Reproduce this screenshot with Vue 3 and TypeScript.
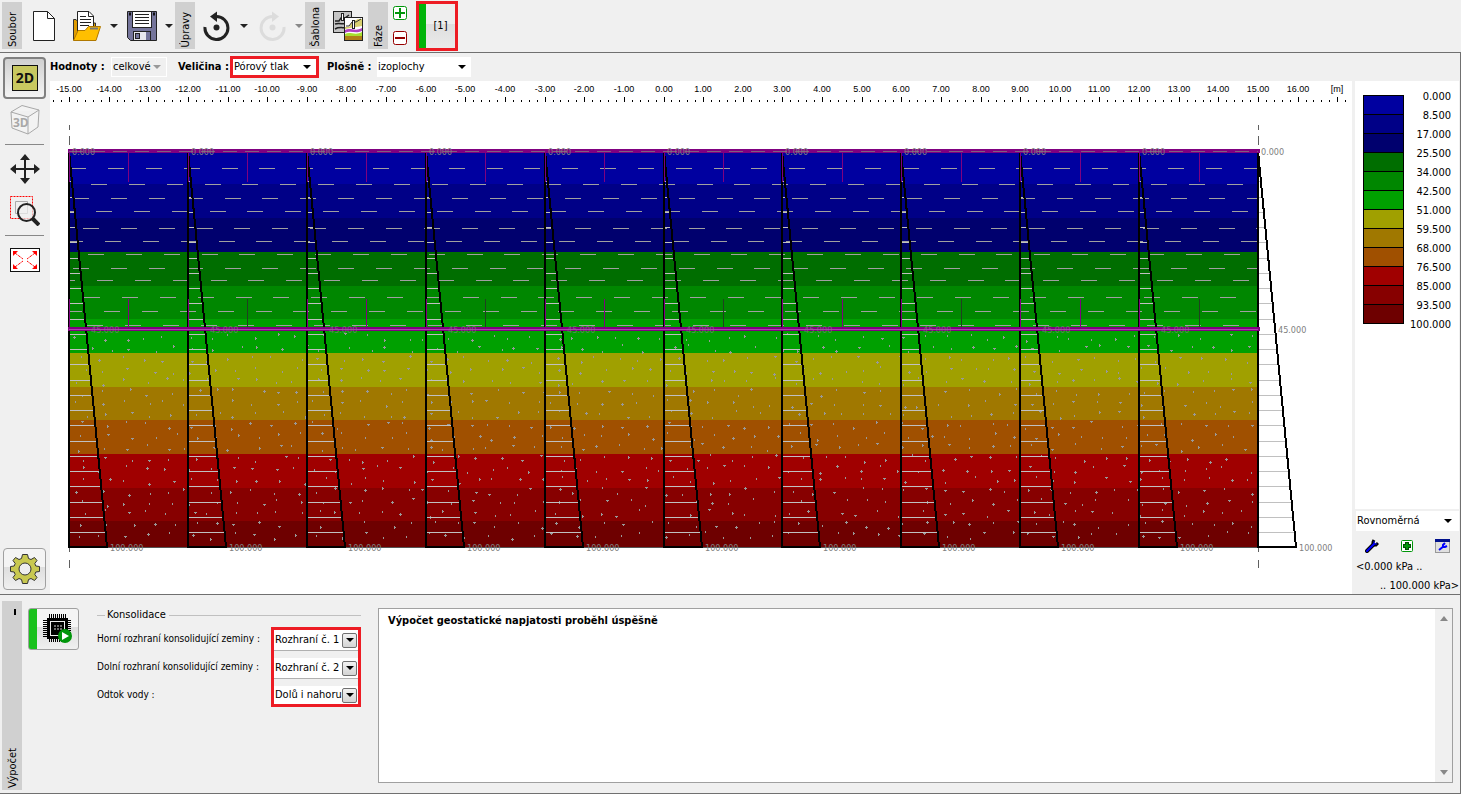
<script setup lang="ts">
import { ref } from 'vue'

const total = ref('celkové')
const quantity = ref('Pórový tlak')
const surface = ref('izoplochy')
const scaleKind = ref('Rovnoměrná')

const params = ref([
  { id: 'top', label: 'Horní rozhraní konsolidující zeminy :', value: 'Rozhraní č. 1', options: ['Rozhraní č. 1', 'Rozhraní č. 2'] },
  { id: 'bottom', label: 'Dolní rozhraní konsolidující zeminy :', value: 'Rozhraní č. 2', options: ['Rozhraní č. 1', 'Rozhraní č. 2'] },
  { id: 'drain', label: 'Odtok vody :', value: 'Dolů i nahoru', options: ['Dolů i nahoru', 'Nahoru', 'Dolů'] },
])

const colors = ['#0000a0', '#000087', '#00006e', '#006e00', '#008700', '#00a000', '#a0a000', '#a07800', '#a05000', '#a00000', '#870000', '#6e0000']
const levels = ['0.000', '8.500', '17.000', '25.500', '34.000', '42.500', '51.000', '59.500', '68.000', '76.500', '85.000', '93.500', '100.000']

const left = 69
const right = 1258
const top = 151
const bottom = 547
const perMetre = (right - left) / 30
const toX = (m: number) => Math.round(left + (m + 15) * perMetre)

const edges = [150, 184, 218, 252, 286, 319, 353, 387, 420, 454, 488, 521, 547]
const bands = colors.map((fill, i) => ({ fill, y: edges[i], h: edges[i + 1] - edges[i] }))

const rulerLabels = Array.from({ length: 32 }, (_, i) => ({ x: toX(i - 15), text: (i - 15).toFixed(2) }))
const ticks = Array.from({ length: 164 }, (_, i) => {
  const k = i - 77
  return { x: toX(k / 5), major: k % 5 === 0 }
})

const profiles = Array.from({ length: 11 }, (_, i) => toX(i * 3 - 15))
const innerProfiles = profiles.slice(0, 10)
const hatchYs = Array.from({ length: 25 }, (_, i) => Math.round(166 + i * 15.25))
const slopeAt = (y: number) => ((y - top) / (bottom - top)) * 38

const clayRows = [
  [168, 108], [184, 91], [198, 111], [211, 96], [228, 83], [241, 105],
  [254, 88], [268, 111], [280, 97], [297, 122], [311, 142], [325, 87],
]
const clay = clayRows.flatMap(([y, start]) => {
  const out: { x: number; y: number; w: number }[] = []
  for (let k = -2; k < 33; k++) {
    const x = Math.round(start + k * 37.85)
    const a = Math.max(x, 70)
    const b = Math.min(x + 16, right)
    if (b > a) out.push({ x: a, y, w: b - a })
  }
  return out
})

const arrows = Array.from({ length: 20 }, (_, i) => ({
  x: Math.round(left + i * 59.45),
  dark: i % 4 === 3,
}))

let seed = 41
const rand = () => {
  seed = (seed * 16807) % 2147483647
  return seed / 2147483647
}
const glyphs = ['h1v2h-1z', 'h1v2h-1z', 'h1v2h-1z', 'h3v1h-1v1h-1v-1h-1z', 'h1v1h1v1h-1v1h-1z', 'h1v1h1v1h-1v1h-1v-1h-1v-1h1z']
let sandPath = ''
for (let row = 0; row < 19; row++) {
  for (let col = 0; col < 55; col++) {
    const x = Math.round(74 + col * 21.6 + rand() * 12 + (row % 2) * 6)
    const y = Math.round(333 + row * 11 + rand() * 7)
    const g = glyphs[Math.floor(rand() * glyphs.length)]
    if (x < right - 4) sandPath += `M${x} ${y}${g}`
  }
}
</script>

<template>
  <div class="app">
    <header class="toolbar">
      <div class="tab"><span>Soubor</span></div>
      <button class="tool" aria-label="Nový">
        <svg width="24" height="32" viewBox="0 0 24 32"><path d="M1.500 1.500H15.500L22.500 8.500V30.500H1.500Z" fill="#fff" stroke="#222" /><path d="M15.500 1.500V8.500H22.500" fill="none" stroke="#222" /></svg>
      </button>
      <button class="tool first" aria-label="Otevřít">
        <svg width="30" height="32" viewBox="0 0 30 32">
          <path d="M1.500 30V9.500H4L7 13H23.500V30Z" fill="#e09c00" stroke="#333" />
          <path d="M5.500 23V1.500H17L21.500 6V20Z" fill="#fff" stroke="#222" />
          <path d="M16.500 1.500V6.500H21.500M8 6.500H14M8 9.500H19M8 12.500H19M8 15.500H17" fill="none" stroke="#222" />
          <path d="M1.500 30.500L6 20.500H13L16.500 16.500H28.500L24 30.500Z" fill="#ffbf00" stroke="#b07800" />
          <path d="M18 18.500H26" stroke="#777" stroke-width="2" />
        </svg>
      </button>
      <button class="drop" aria-label="Otevřít – nabídka"><svg width="8" height="4"><path d="M0 0H8L4 4Z" fill="#222" /></svg></button>
      <button class="tool" aria-label="Uložit">
        <svg width="30" height="32" viewBox="0 0 30 32">
          <path d="M.5 1.500H29.500V30.500H3.500L.5 27.500Z" fill="#75759b" stroke="#222" />
          <rect x="5.500" y="1.500" width="19" height="16" fill="#fff" stroke="#222" />
          <path d="M8 4.500H22M8 7.500H22M8 10.500H22M8 13.500H22" stroke="#222" />
          <path d="M2 4H4M26 4H28" stroke="#111" stroke-width="3" />
          <rect x="6.500" y="21.500" width="17" height="9" fill="#e8e8ee" stroke="#222" />
          <rect x="8.500" y="23.500" width="4" height="5" fill="#75759b" stroke="#222" />
          <rect x="19" y="22" width="4" height="8" fill="#75759b" />
        </svg>
      </button>
      <button class="drop" aria-label="Uložit – nabídka"><svg width="8" height="4"><path d="M0 0H8L4 4Z" fill="#222" /></svg></button>
      <div class="tab"><span>Úpravy</span></div>
      <button class="tool" aria-label="Zpět">
        <svg width="28" height="30" viewBox="0 0 28 30"><path d="M2 16A11.500 11.500 0 1 0 13 5.500" fill="none" stroke="#222" stroke-width="3" /><path d="M14 .5V11L7 5.500Z" fill="#222" /><circle cx="13.500" cy="16.500" r="3" fill="#222" /></svg>
      </button>
      <button class="drop" aria-label="Zpět – nabídka"><svg width="8" height="4"><path d="M0 0H8L4 4Z" fill="#222" /></svg></button>
      <button class="tool" aria-label="Znovu" disabled>
        <svg width="28" height="30" viewBox="0 0 28 30"><path d="M26 16A11.500 11.500 0 1 1 15 5.500" fill="none" stroke="#dcdcdc" stroke-width="3" /><path d="M14 .5V11L21 5.500Z" fill="#dcdcdc" /><circle cx="14.500" cy="16.500" r="3" fill="#dcdcdc" /></svg>
      </button>
      <button class="drop" aria-label="Znovu – nabídka" disabled><svg width="8" height="4"><path d="M0 0H8L4 4Z" fill="#888" /></svg></button>
      <div class="tab"><span>Šablona</span></div>
      <button class="tool first" aria-label="Šablona">
        <svg width="30" height="32" viewBox="0 0 30 32">
          <rect x=".5" y="1.500" width="18" height="21" fill="#c4c4c4" stroke="#222" />
          <path d="M2 11H6L8 8H12L16 5M2 14C7 12 12 16 17 12M2 19C7 16 11 19 17 17" fill="none" stroke="#222" stroke-width="1.500" />
          <rect x="8.500" y="3.500" width="2" height="7" fill="#fff" stroke="#222" />
          <rect x="11.500" y="7.500" width="18" height="23" fill="#fff" stroke="#222" />
          <path d="M12 17H16L19 12L25 9H29V16L12 19Z" fill="#d8d070" />
          <path d="M12 20C17 17 22 22 29 18V21C22 24 18 20 12 23Z" fill="#b040c0" />
          <path d="M12 24C17 21 22 26 29 22V26H12Z" fill="#a8e030" />
          <rect x="12" y="26" width="17" height="4" fill="#b08018" />
          <path d="M13 16H16L19 12H23L28 9" fill="none" stroke="#333" />
          <rect x="19.500" y="10.500" width="2" height="8" fill="#fff" stroke="#222" />
        </svg>
      </button>
      <div class="tab"><span>Fáze</span></div>
      <div class="phase-edit">
        <button aria-label="Přidat fázi"><svg width="14" height="14"><rect x=".5" y=".5" width="13" height="13" rx="2" fill="#fff" stroke="#00960a" /><path d="M2 7H12M7 2V12" stroke="#00960a" stroke-width="2" /></svg></button>
        <button aria-label="Odebrat fázi"><svg width="14" height="14"><rect x=".5" y=".5" width="13" height="13" rx="2" fill="#fff" stroke="#960000" /><path d="M2 7H12" stroke="#960000" stroke-width="2" /></svg></button>
      </div>
      <button class="phase">[1]</button>
    </header>

    <main class="work">
      <nav class="side">
        <button class="side-btn pressed" aria-label="2D">
          <svg width="26" height="26"><rect x=".5" y=".5" width="25" height="25" fill="#c8c860" stroke="#111" /><text x="13" y="18" text-anchor="middle" class="icon-text">2D</text></svg>
        </button>
        <button class="side-btn" aria-label="3D">
          <svg width="30" height="32" viewBox="0 0 30 32"><path d="M1 8L12 1.500L29 6L28 23L18 30L2 24ZM1 8L18 13L29 6M18 13V30" fill="#f3f3f3" stroke="#a8a8a8" /><text x="3" y="23" class="icon-text cube">3D</text></svg>
        </button>
        <hr />
        <button class="side-btn" aria-label="Posun">
          <svg width="30" height="30"><path d="M15 4V26M4 15H26" stroke="#222" stroke-width="2" /><path d="M15 0L20 6H10ZM15 30L20 24H10ZM0 15L6 10V20ZM30 15L24 10V20Z" fill="#222" /></svg>
        </button>
        <button class="side-btn" aria-label="Zvětšit výřez">
          <svg width="30" height="30"><rect x=".5" y=".5" width="22" height="22" fill="none" stroke="#f00" stroke-dasharray="2 1" /><path d="M5.500 5.500H17.500V17.500H5.500Z" fill="none" stroke="#aaa" /><circle cx="16.500" cy="16.500" r="8.500" fill="#f0f0f0" fill-opacity=".7" stroke="#222" stroke-width="2" /><path d="M22.500 22.500L29 29" stroke="#222" stroke-width="4" /></svg>
        </button>
        <hr />
        <button class="side-btn" aria-label="Zobrazit vše">
          <svg width="30" height="24"><rect x=".5" y=".5" width="29" height="23" fill="#fff" stroke="#111" /><path d="M5 5L13 11M25 5L17 11M5 19L13 13M25 19L17 13" stroke="#f00" stroke-dasharray="3 1" /><path d="M3 3H8L3 8ZM27 3H22L27 8ZM3 21H8L3 16ZM27 21H22L27 16Z" fill="#f00" /></svg>
        </button>
        <button class="side-btn raised" aria-label="Nastavení">
          <svg width="32" height="32" viewBox="-16 -16 32 32">
            <path d="M-2.500 -14.500H2.500L3.500 -10.500L6 -9.500L9.500 -11.500L12 -8.500L9.800 -5.500L10.800 -3L14.500 -2.500V2.500L10.800 3L9.800 5.500L12 8.500L9.500 11.500L6 9.500L3.500 10.500L2.500 14.500H-2.500L-3.500 10.500L-6 9.500L-9.500 11.500L-12 8.500L-9.800 5.500L-10.800 3L-14.500 2.500V-2.500L-10.800 -3L-9.800 -5.500L-12 -8.500L-9.500 -11.500L-6 -9.500L-3.500 -10.500Z" fill="#c8c850" stroke="#333" />
            <circle r="6" fill="#eee" stroke="#333" />
          </svg>
        </button>
      </nav>

      <section class="view">
        <div class="options">
          <label class="bold" for="total">Hodnoty :</label>
          <div class="pick disabled w56"><select id="total" v-model="total" disabled><option>celkové</option></select><svg width="8" height="4"><path d="M0 0H8L4 4Z" fill="#999" /></svg></div>
          <label class="bold gap" for="quantity">Veličina :</label>
          <div class="pick marked w88"><select id="quantity" v-model="quantity"><option>Pórový tlak</option></select><svg width="8" height="4"><path d="M0 0H8L4 4Z" /></svg></div>
          <label class="bold third" for="surface">Plošně :</label>
          <div class="pick w94"><select id="surface" v-model="surface"><option>izoplochy</option></select><svg width="8" height="4"><path d="M0 0H8L4 4Z" /></svg></div>
        </div>

        <div class="plot">
          <svg class="canvas" viewBox="50 81 1302 513" preserveAspectRatio="xMinYMin meet">
            <g shape-rendering="crispEdges">
              <rect v-for="(t, i) in ticks" :key="i" :x="t.x" :y="t.major ? 97 : 100" width="1" :height="t.major ? 5 : 2" />
            </g>
            <g class="ruler">
              <text v-for="l in rulerLabels" :key="l.text" :x="l.x" y="92">{{ l.text }}</text>
              <text x="1337" y="92">[m]</text>
            </g>

            <g shape-rendering="crispEdges">
              <rect v-for="b in bands" :key="b.y" :x="left" :y="b.y" :width="right - left" :height="b.h" :fill="b.fill" />
              <rect v-for="(d, i) in clay" :key="i" :x="d.x" :y="d.y" :width="d.w" height="1" fill="#a0a0a0" />
              <path :d="sandPath" fill="#999" />
              <path :d="`M${left} 547.500H${right}`" stroke="#555" />
              <path v-for="x in [left, right]" :key="x" :d="`M${x + 0.5} 125v5m0 6v9M${x + 0.5} 547v5m0 8v8`" stroke="#606060" />
              <template v-for="x in profiles" :key="x">
                <rect v-for="y in hatchYs" :key="y" :x="x" :y="y" :width="slopeAt(y)" height="1" fill="#c0c0c0" />
                <path :d="`M${x} ${top}V${bottom}H${x + 38}L${x} ${top}`" fill="none" stroke="#000" stroke-width="2" />
              </template>
              <rect v-for="a in arrows" :key="`u${a.x}`" :x="a.x" y="153" width="1" height="29" fill="#800080" />
              <rect v-for="a in arrows" :key="`l${a.x}`" :x="a.x" y="299" width="1" height="28" :fill="a.dark ? '#204020' : '#800080'" />
            </g>

            <g shape-rendering="crispEdges">
              <rect x="68" y="149" width="1192" height="4" fill="#800080" />
              <path d="M69 151.500H1258" stroke="#806080" stroke-dasharray="14 8" />
              <rect x="68" y="327" width="1192" height="4" fill="#800080" />
              <path d="M69 329.500H1258" stroke="#b040b0" />
            </g>
            <g class="values">
              <template v-for="x in innerProfiles" :key="x">
                <text :x="x + 3" y="155">0.000</text>
                <text :x="x + 22" y="333" opacity=".7">45.000</text>
                <text :x="x + 41" y="551">100.000</text>
              </template>
              <text x="1261" y="155">0.000</text>
              <text x="1278" y="333">45.000</text>
              <text x="1299" y="551">100.000</text>
            </g>
          </svg>

          <aside class="legend">
            <div class="scale">
              <div class="swatches"><i v-for="c in colors" :key="c" :style="{ background: c }"></i></div>
              <ol><li v-for="l in levels" :key="l">{{ l }}</li></ol>
            </div>
            <div class="legend-foot">
              <div class="pick wide"><select v-model="scaleKind" aria-label="Stupnice"><option>Rovnoměrná</option></select><svg width="8" height="4"><path d="M0 0H8L4 4Z" /></svg></div>
              <div class="legend-tools">
                <button aria-label="Upravit stupnici"><svg width="14" height="14"><path d="M2 12L8 6" stroke="#000" stroke-width="4" stroke-linecap="round" /><path d="M9 1L8 3V6H11L13 4" fill="none" stroke="#000" stroke-width="3" /><path d="M2 12L9 5" stroke="#00f" stroke-width="2" stroke-linecap="round" /><path d="M9 2V5H12" fill="none" stroke="#00f" /></svg></button>
                <button aria-label="Přidat stupnici"><svg width="12" height="12"><rect x=".5" y=".5" width="11" height="11" rx="1" fill="#fff" stroke="#00960a" /><path d="M2 6H10M6 2V10" stroke="#004d00" stroke-width="4" /><path d="M3 6H9M6 3V9" stroke="#00960a" stroke-width="2" /></svg></button>
                <button aria-label="Správce stupnic"><svg width="15" height="14"><rect x=".5" y=".5" width="14" height="13" fill="#e0e0e0" stroke="#999" /><rect width="15" height="3" fill="#00108c" /><path d="M4 11L9 7" stroke="#00f" stroke-width="2" /><path d="M10 4L8 6V8H10L12 7" fill="none" stroke="#00f" stroke-width="2" /></svg></button>
              </div>
              <p>&lt;0.000 kPa ..</p>
              <p class="end">.. 100.000 kPa&gt;</p>
            </div>
          </aside>
        </div>
      </section>
    </main>

    <section class="panel">
      <div class="tab tall"><b></b><span>Výpočet</span></div>
      <button class="compute" aria-label="Spustit výpočet">
        <svg width="30" height="30">
          <path d="M6 2H24M6 26H24" stroke="#000" stroke-width="4" stroke-dasharray="1 1" />
          <path d="M2 6V24M26 6V24" stroke="#000" stroke-width="4" stroke-dasharray="1 1" />
          <rect x="4" y="4" width="21" height="21" fill="#000" />
          <rect x="7.500" y="7.500" width="14" height="14" fill="none" stroke="#eee" />
          <path d="M11 12H19M11 15H19" stroke="#ddd" stroke-dasharray="2 1" />
          <circle cx="22" cy="22" r="7" fill="#00960a" /><path d="M19 18L26 22L19 26Z" fill="#fff" />
        </svg>
      </button>
      <fieldset class="params">
        <legend>Konsolidace</legend>
        <div class="grid">
          <div class="labels"><label v-for="p in params" :key="p.id" :for="p.id">{{ p.label }}</label></div>
          <div class="combos">
            <div v-for="p in params" :key="p.id" class="combo">
              <select :id="p.id" v-model="p.value"><option v-for="o in p.options" :key="o">{{ o }}</option></select>
              <i><svg width="8" height="4"><path d="M0 0H8L4 4Z" /></svg></i>
            </div>
          </div>
        </div>
      </fieldset>
      <div class="log">
        <p>Výpočet geostatické napjatosti proběhl úspěšně</p>
        <div class="bar">
          <svg width="8" height="5"><path d="M0 5H8L4 0Z" fill="#888" /></svg>
          <svg width="8" height="5"><path d="M0 0H8L4 5Z" fill="#888" /></svg>
        </div>
      </div>
    </section>
  </div>
</template>

<style>
body { margin: 0; background: #f0f0f0; }
</style>

<style scoped>
* { box-sizing: border-box; }
.app { display: flex; flex-direction: column; min-height: 100vh; background: #f0f0f0; color: #000; font: 11px/14px "DejaVu Sans Condensed", "DejaVu Sans", sans-serif; }
button { display: flex; align-items: center; justify-content: center; padding: 0; border: 0; background: none; font: inherit; color: inherit; }
svg { display: block; flex: none; }
p, ol { margin: 0; padding: 0; list-style: none; }

.toolbar { display: flex; height: 53px; padding: 2px 2px 0; border-bottom: 1px solid #707070; }
.tab { display: flex; flex-direction: column; align-items: center; justify-content: flex-end; width: 20px; height: 47px; padding: 0 0 2px 2px; background: #d0d0d0; }
.tab span { writing-mode: vertical-rl; transform: rotate(180deg); white-space: nowrap; }
.tool { width: 40px; height: 48px; margin-left: 2px; }
.tool.first { width: 41px; }
.drop { width: 13px; height: 48px; }
.phase-edit { display: flex; flex-direction: column; gap: 11px; padding: 4px 9px 0 5px; }
.phase { width: 42px; height: 50px; margin-top: -1px; border: 3px solid #ed1c24; background: linear-gradient(90deg, #00b40a 7px, transparent 7px), linear-gradient(#eee 45%, #dedede 45%, #eaeaea); padding-left: 7px; }

.work { display: flex; flex: 1; border-right: 1px solid #707070; }
.side { display: flex; flex-direction: column; width: 50px; padding: 4px 4px 4px 3px; }
.side-btn { width: 43px; height: 42px; border-radius: 4px; }
.side-btn.pressed { border: 2px solid #808080; background: linear-gradient(#d0d0d0, #f4f4f4); }
.side-btn.raised { margin-top: auto; border: 1px solid #a0a0a0; background: linear-gradient(#f4f4f4 45%, #dedede 45%, #f0f0f0); }
.side hr { width: 39px; height: 1px; margin: 3px 2px; border: 0; background: #888; }
.icon-text { font: bold 14px "Open Sans", sans-serif; fill: #111; }
.icon-text.cube { font-size: 12px; fill: #a8a8a8; }

.view { display: flex; flex: 1; flex-direction: column; min-width: 0; }
.options { display: flex; align-items: center; height: 28px; }
.bold { font-weight: bold; width: 61px; white-space: nowrap; }
.bold.gap { width: 52px; margin-left: 11px; }
.bold.third { width: 50px; margin-left: 8px; }
.pick { display: flex; align-items: center; height: 20px; padding-right: 5px; background: #fff; }
.pick select { flex: 1; min-width: 0; }
select { appearance: none; height: 16px; padding: 0 0 0 1px; border: 0; border-radius: 0; outline: 0; background: transparent; color: #000; opacity: 1; font: inherit; }
.pick.disabled { border: 1px solid #fff; background: #f0f0f0; }
.w56 { width: 56px; }
.w88 { width: 89px; }
.w94 { width: 94px; }
.pick.marked { height: 22px; border: 3px solid #ed1c24; }

.plot { display: flex; flex: 1; }
.canvas { flex: 1; min-width: 0; background: #fff; }
.ruler { font: 9px "Liberation Sans", sans-serif; text-anchor: middle; }
.values { font-size: 9px; fill: #808080; }
.legend { display: flex; flex-direction: column; width: 108px; padding: 0 1px 0 3px; }
.scale { display: flex; flex: 1; justify-content: space-between; padding: 6px 8px 0; background: #fff; }
.swatches { display: flex; flex-direction: column; width: 41px; height: 229px; margin-top: 8px; border: 1px solid #000; border-top: 0; }
.swatches i { flex: 1; border-top: 1px solid #000; }
.scale li { height: 19px; line-height: 19px; text-align: right; }
.legend-foot { height: 85px; padding: 2px 0 0 1px; }
.wide { width: 100%; padding-right: 7px; }
.legend-tools { display: flex; align-items: center; justify-content: space-between; height: 29px; padding: 0 9px; }
.legend-foot p { padding-bottom: 5px; white-space: nowrap; }
.end { text-align: right; }

.panel { display: flex; height: 200px; padding: 13px 7px 0 2px; border: solid #707070; border-width: 1px 1px 1px 0; }
.tall { height: 189px; margin-top: -7px; }
.tall b { width: 2px; height: 6px; margin: 8px 0 auto 3px; background: #000; }
.compute { width: 51px; height: 42px; margin-left: 6px; padding-left: 8px; border: 1px solid #a0a0a0; border-radius: 3px; background: linear-gradient(90deg, #19c11c 8px, transparent 8px), linear-gradient(#f4f4f4 45%, #dedede 45%, #f0f0f0); }
.params { width: 264px; min-width: 0; height: 100px; margin: 0 0 0 18px; padding: 0; border: 0; border-top: 1px solid #c0c0c0; }
.params legend { margin-left: 8px; padding: 0 3px 0 2px; }
.grid { display: flex; align-items: flex-start; justify-content: space-between; margin-top: 5px; }
.labels { flex: 1; min-width: 0; }
.labels label { display: block; height: 28px; font-size: 10px; line-height: 24px; white-space: nowrap; }
.combos { display: flex; flex: none; flex-direction: column; gap: 7px; width: 90px; border: 3px solid #ed1c24; }
.combo { display: flex; align-items: center; height: 21px; border-bottom: 1px solid #b0b0b0; background: #fff; }
.combo:last-child { height: 18px; border-bottom: 0; }
.combo select { flex: 1; min-width: 0; }
.combo i { display: flex; align-items: center; justify-content: center; width: 15px; height: 15px; margin-right: 1px; border: 1px solid #707070; border-radius: 2px; background: linear-gradient(#f2f2f2, #d4d4d4); }
.log { display: flex; flex: 1; justify-content: space-between; height: 175px; margin-left: 17px; border: 1px solid #a0a0a0; background: #fff; }
.log p { padding: 5px 9px; font-weight: bold; }
.bar { display: flex; flex-direction: column; align-items: center; justify-content: space-between; width: 17px; padding: 7px 0; background: #f0f0f0; }
</style>
